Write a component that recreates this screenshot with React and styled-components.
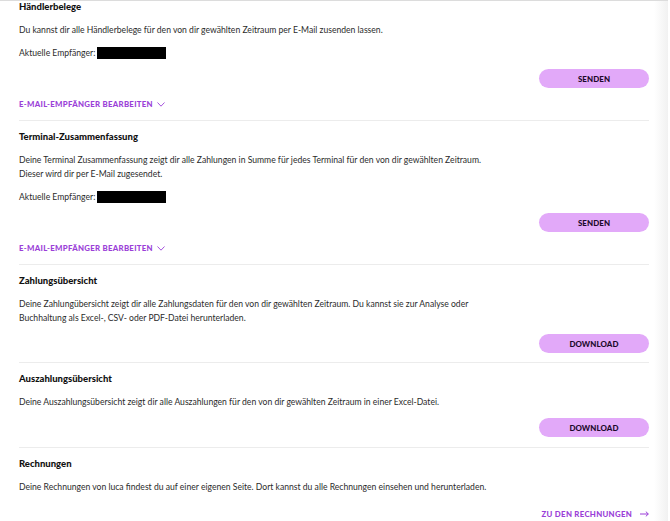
import React from "react";
import styled, { createGlobalStyle } from "styled-components";

const Global = createGlobalStyle`
  html, body { margin: 0; padding: 0; background: #fff; }
  body { font-family: Lato, "Noto Sans", sans-serif; -webkit-font-smoothing: antialiased; }
`;

const Page = styled.div`
  width: 668px;
  min-height: 521px;
  box-sizing: border-box;
  border-top: 1px solid #dcdcdc;
  padding: 0 19px 0 19px;
  background: linear-gradient(to right, #fff 0, #fff calc(100% - 14px), #f1f1f1 100%);
`;

const Content = styled.div`
  width: 630px;
  margin-top: -1px;
`;

const Section = styled.section`
  display: flex;
  flex-direction: column;
  gap: 9px;
  padding: ${(p) => (p.$first ? "0" : "9px")} 0 ${(p) => p.$pb || 9}px;
  border-bottom: ${(p) => (p.$last ? "none" : "1px solid #ececec")};
`;

const Title = styled.h2`
  margin: 0;
  font-size: 9.5px;
  line-height: 14px;
  font-weight: 900;
  color: #111;
`;

const Text = styled.p`
  margin: 0;
  font-size: 8.6px;
  line-height: 14px;
  color: #2b2b2b;
`;

const Recipient = styled.div`
  display: flex;
  align-items: center;
  gap: 2px;
  font-size: 8.6px;
  line-height: 14px;
  color: #2b2b2b;
`;

const Redacted = styled.span`
  display: inline-block;
  width: 69px;
  height: 12px;
  background: #000;
`;

const ButtonRow = styled.div`
  display: flex;
  justify-content: flex-end;
`;

const PillButton = styled.button`
  width: 110px;
  height: 19px;
  border: none;
  border-radius: 10px;
  background: #e2a9f9;
  color: #1c0a2c;
  font-family: Lato, "Noto Sans", sans-serif;
  font-weight: 900;
  font-size: 7.9px;
  letter-spacing: 0.1px;
  padding: 0;
  cursor: pointer;
`;

const LinkRow = styled.div`
  display: flex;
  justify-content: ${(p) => (p.$right ? "flex-end" : "flex-start")};
  margin-top: ${(p) => (p.$right ? "4px" : "0")};
`;

const TextLink = styled.a`
  display: inline-flex;
  align-items: center;
  gap: ${(p) => (p.$gap || 4)}px;
  font-size: 7.8px;
  line-height: 14px;
  font-weight: 900;
  letter-spacing: 0.3px;
  color: #9b3fd8;
  text-decoration: none;
  cursor: pointer;
`;

const Chevron = () => (
  <svg width="8" height="5" viewBox="0 0 8 5" fill="none">
    <polyline points="0.5,0.5 4,4.2 7.5,0.5" stroke="#9b3fd8" strokeWidth="0.9" />
  </svg>
);

const Arrow = () => (
  <svg width="9" height="6" viewBox="0 0 9 6" fill="none">
    <line x1="0" y1="3" x2="8.3" y2="3" stroke="#9b3fd8" strokeWidth="1" />
    <polyline points="5.8,0.6 8.3,3 5.8,5.4" stroke="#9b3fd8" strokeWidth="1" />
  </svg>
);

export default function App() {
  return (
    <>
      <Global />
      <Page>
        <Content>
          <Section $first>
            <Title>Händlerbelege</Title>
            <Text>Du kannst dir alle Händlerbelege für den von dir gewählten Zeitraum per E-Mail zusenden lassen.</Text>
            <Recipient>Aktuelle Empfänger: <Redacted /></Recipient>
            <ButtonRow><PillButton>SENDEN</PillButton></ButtonRow>
            <LinkRow><TextLink>E-MAIL-EMPFÄNGER BEARBEITEN <Chevron /></TextLink></LinkRow>
          </Section>
          <Section>
            <Title>Terminal-Zusammenfassung</Title>
            <Text>
              Deine Terminal Zusammenfassung zeigt dir alle Zahlungen in Summe für jedes Terminal für den von dir gewählten Zeitraum.
              <br />
              Dieser wird dir per E-Mail zugesendet.
            </Text>
            <Recipient>Aktuelle Empfänger: <Redacted /></Recipient>
            <ButtonRow><PillButton>SENDEN</PillButton></ButtonRow>
            <LinkRow><TextLink>E-MAIL-EMPFÄNGER BEARBEITEN <Chevron /></TextLink></LinkRow>
          </Section>
          <Section>
            <Title>Zahlungsübersicht</Title>
            <Text>
              Deine Zahlungübersicht zeigt dir alle Zahlungsdaten für den von dir gewählten Zeitraum. Du kannst sie zur Analyse oder
              <br />
              Buchhaltung als Excel-, CSV- oder PDF-Datei herunterladen.
            </Text>
            <ButtonRow><PillButton>DOWNLOAD</PillButton></ButtonRow>
          </Section>
          <Section $pb={10}>
            <Title>Auszahlungsübersicht</Title>
            <Text>Deine Auszahlungsübersicht zeigt dir alle Auszahlungen für den von dir gewählten Zeitraum in einer Excel-Datei.</Text>
            <ButtonRow><PillButton>DOWNLOAD</PillButton></ButtonRow>
          </Section>
          <Section $last>
            <Title>Rechnungen</Title>
            <Text>Deine Rechnungen von luca findest du auf einer eigenen Seite. Dort kannst du alle Rechnungen einsehen und herunterladen.</Text>
            <LinkRow $right><TextLink $gap={8}>ZU DEN RECHNUNGEN <Arrow /></TextLink></LinkRow>
          </Section>
        </Content>
      </Page>
    </>
  );
}
